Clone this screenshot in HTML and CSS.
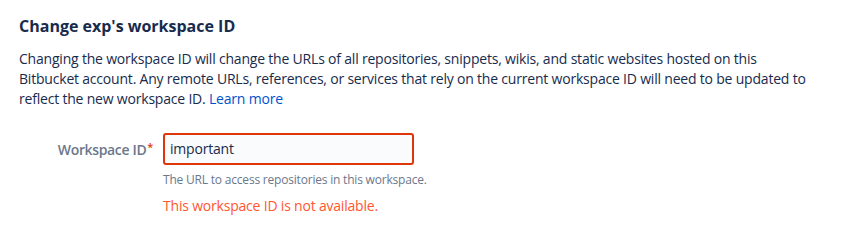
FILE: index.html
```html
<!DOCTYPE html>
<html>
<head>
<meta charset="utf-8">
<link rel="stylesheet" href="styles.css">
</head>
<body>
<div class="page">
  <h2 class="title">Change exp's workspace ID</h2>
  <p class="desc">Changing the workspace ID will change the URLs of all repositories, snippets, wikis, and static websites hosted on this Bitbucket account. Any remote URLs, references, or services that rely on the current workspace ID will need to be updated to reflect the new workspace ID. <a href="#" class="link">Learn more</a></p>
  <div class="field">
    <label class="label">Workspace ID<span class="req">*</span></label>
    <div class="control">
      <div class="input">important</div>
      <div class="help">The URL to access repositories in this workspace.</div>
      <div class="error">This workspace ID is not available.</div>
    </div>
  </div>
</div>
</body>
</html>
```
FILE: styles.css
```css
html, body { margin: 0; padding: 0; background: #fff; }
body { font-family: "Open Sans", "Noto Sans", sans-serif; color: #172B4D; }
.page { padding: 14px 19px 0 19px; width: 800px; }
.title { font-size: 16px; font-weight: 700; margin: 0; line-height: 24px; color: #172B4D; }
.desc { font-size: 14px; line-height: 20px; margin: 11px 0 0 0; color: #172B4D; letter-spacing: -0.2px; }
.link { color: #0052CC; text-decoration: none; }
.field { display: flex; margin-top: 24px; }
.label { width: 134px; text-align: right; font-size: 14px; color: #6B778C; font-weight: 600; padding-top: 7px; padding-right: 10px; line-height: 20px; letter-spacing: -0.35px; }
.req { color: #DE350B; font-size: 11px; vertical-align: top; position: relative; top: -3px; margin-left: 1px; }
.control { display: flex; flex-direction: column; }
.input { width: 237px; height: 28px; border: 2px solid #DE350B; border-radius: 3px; background: #FAFBFC; font-size: 14px; line-height: 28px; padding: 0 5px; color: #172B4D; letter-spacing: -0.2px; }
.help { font-size: 12px; color: #6B778C; margin-top: 7px; line-height: 16px; letter-spacing: -0.2px; }
.error { font-size: 14px; color: #FF5630; margin-top: 8px; line-height: 20px; letter-spacing: -0.2px; }
```
